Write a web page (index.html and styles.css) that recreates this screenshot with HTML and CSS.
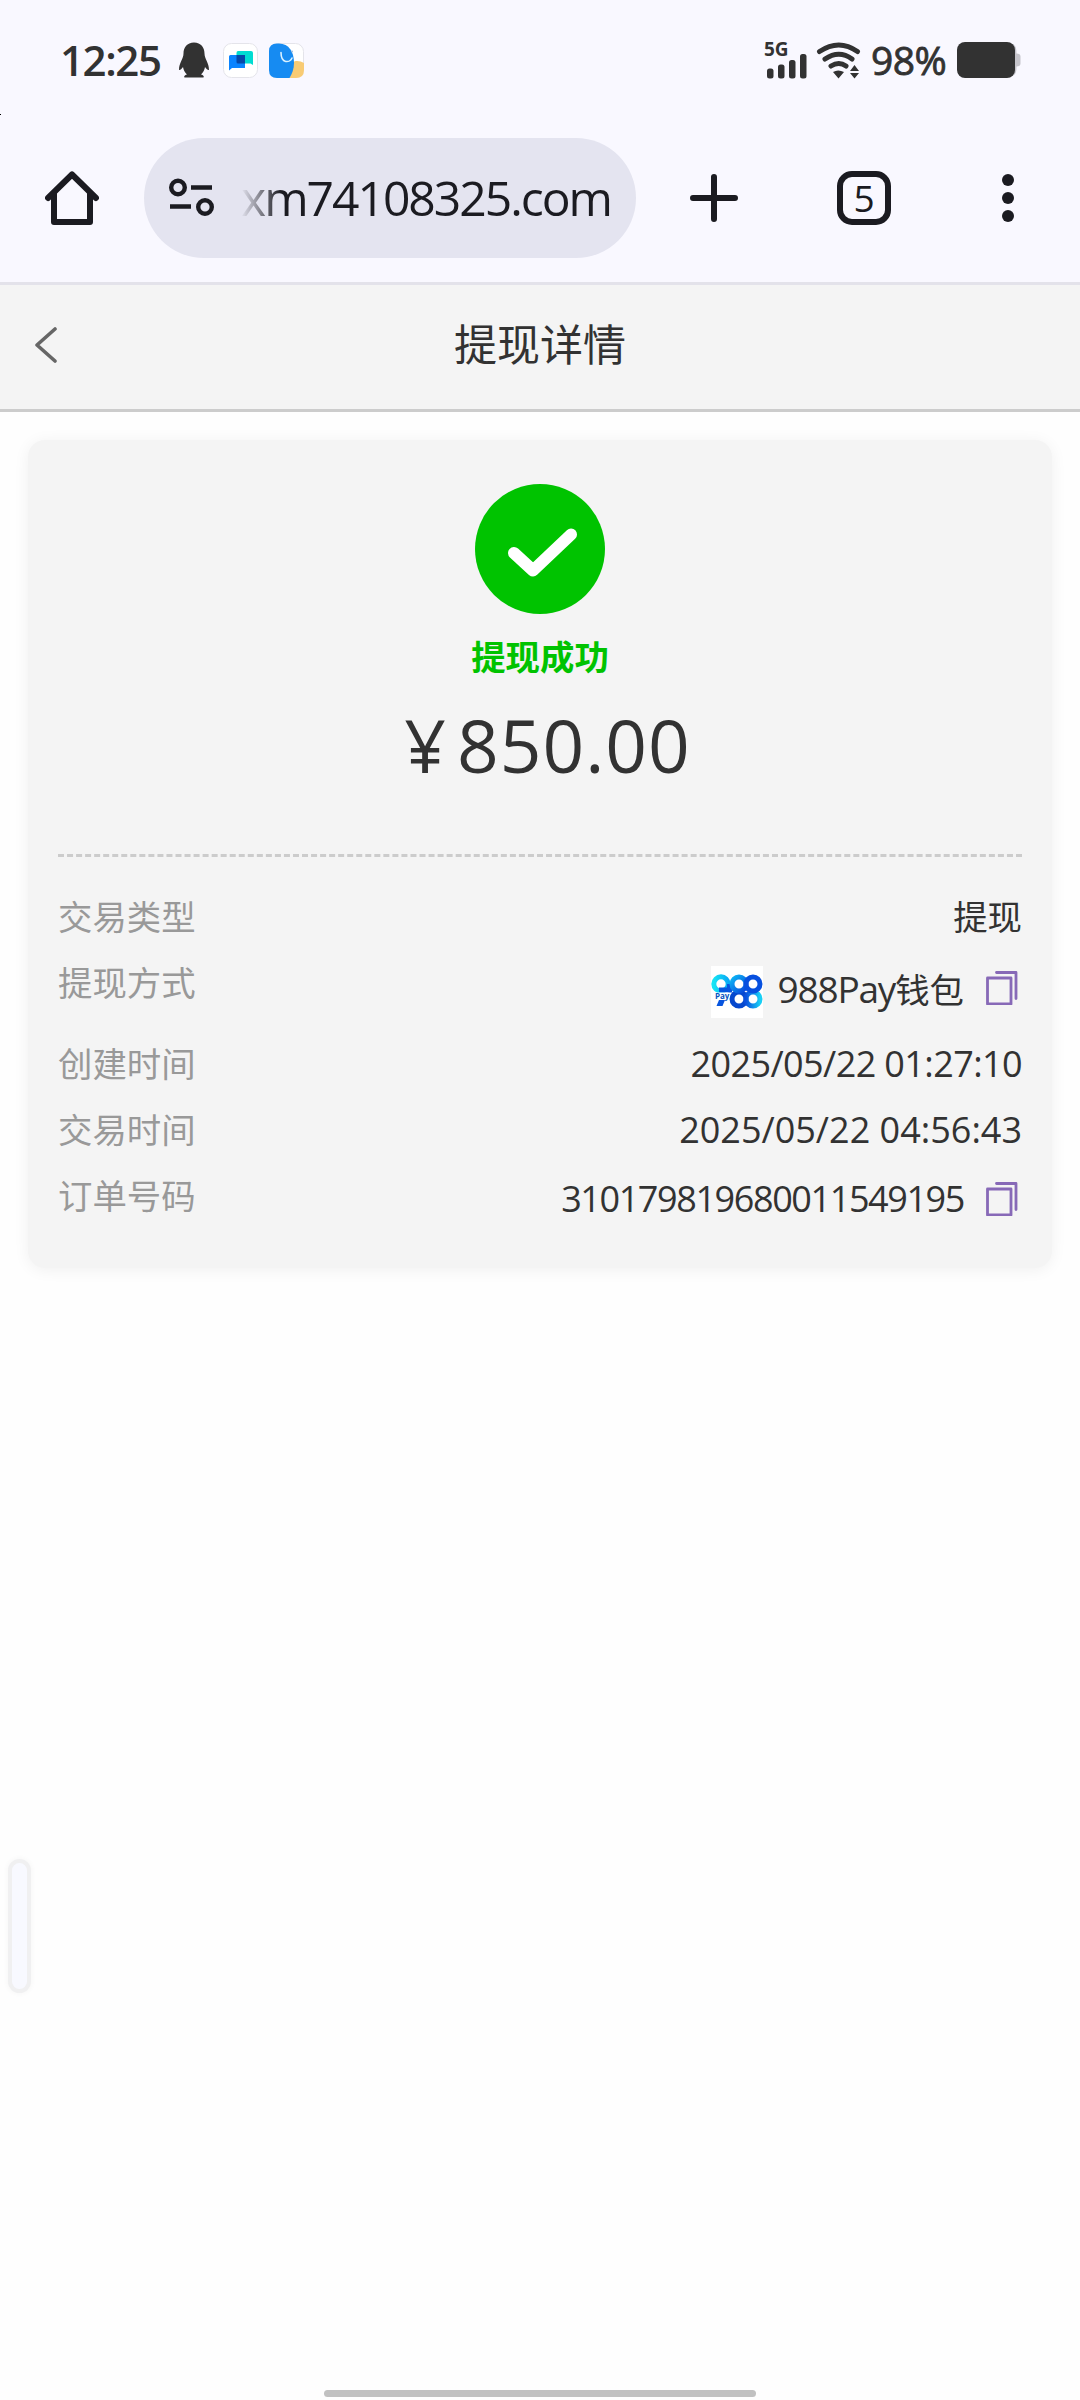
FILE: index.html
```html
<!DOCTYPE html>
<html lang="zh-CN">
<head>
<meta charset="utf-8">
<title>提现详情</title>
<link rel="stylesheet" href="styles.css">
</head>
<body>
<div class="screen">
  <div class="statusbar">
    <span class="clock">12:25</span>
    <svg class="app penguin" width="30" height="36" viewBox="0 0 30 36"><path fill="#323232" d="M15 0.500C8 .5 4.500 5.500 4.500 11.500C4.500 17 0 20.500 0 28C1 28.500 2.500 27 4 25C4.500 28 6 31 8 32.500C5 33 4.500 35.500 6 35.500H24C25.500 35.500 25 33 22 32.500C24 31 25.500 28 26 25C27.500 27 29 28.500 30 28C30 20.500 25.500 17 25.500 11.500C25.500 5.500 22 .5 15 .5Z"/></svg>
    <svg class="app chat" width="35" height="35" viewBox="0 0 35 35"><rect x=".5" y=".5" width="34" height="34" rx="8" fill="#fff" stroke="#e4e4ea"/><path fill="#00dcd2" d="M15 8H28q2 0 2 2V22L27.500 20.500H15q-1.500 0-1.500-1.500V10q0-2 1.500-2Z"/><path fill="#0a84ff" d="M7.500 12H22V25H9L6 27.500V13.500q0-1.500 1.500-1.500Z"/><path fill="#0648a8" d="M13.500 12H22V20.500H15q-1.500 0-1.500-1.500Z"/></svg>
    <svg class="app elephant" width="35" height="35" viewBox="0 0 35 35"><rect x=".5" y=".5" width="34" height="34" rx="8" fill="#fff" stroke="#e4e4ea"/><path fill="#f8cb74" d="M22 20C27 17 31 18 35 20V27q0 8-8 8H20Z"/><path fill="#168bf2" d="M8 0.500H10C20 .5 25 9 25 20C25 26 23 31 20.500 35H8Q0 35 0 27V8Q0 .5 8 .5Z"/><path fill="none" stroke="#d9f1ff" stroke-width="1.600" stroke-linecap="round" d="M12 9.500C12 21 21 20 23 15"/><circle cx="23" cy="8.500" r="1" fill="#9bd"/></svg>
    <div class="cellular">
      <span class="net">5G</span>
      <svg class="signal" width="40" height="25" viewBox="0 0 40 25"><g fill="#323232"><rect y="14.500" width="6.500" height="10" rx="2.500"/><rect x="11" y="10.500" width="6.500" height="14" rx="2.500"/><rect x="22" y="6" width="6.500" height="18.500" rx="2.500"/><rect x="33" width="6.500" height="24.500" rx="2.500"/></g></svg>
    </div>
    <svg class="wifi" width="46" height="37" viewBox="0 0 46 37"><g fill="none" stroke="#323232" stroke-width="5" stroke-linecap="round"><path d="M3.500 9.500Q23 -3.500 41.500 9.500"/><path d="M9 17Q23 7.500 36 17"/><path d="M15 24Q23 19 30 24"/></g><path fill="#323232" d="M17 30Q22 27 28 30L22.500 36.500ZM34 29L38.500 23L43 29ZM34 31H43L38.500 36.500Z"/></svg>
    <span class="percent">98%</span>
    <svg class="battery" width="64" height="36" viewBox="0 0 64 36"><path fill="#c5c4cb" d="M55 2C59 3 59.500 7 59.500 11.500q4 0 4 3v7q0 3-4 3C59.500 29 59 33 55 34Z"/><rect width="58" height="36" rx="8" fill="#323232"/></svg>
  </div>
  <div class="toolbar">
    <svg class="home" width="54" height="54" viewBox="0 0 54 54" fill="none" stroke="#1b1b21" stroke-width="6" stroke-linecap="round" stroke-linejoin="round"><path d="M3 27L27 3.500L51 27"/><path stroke-linecap="butt" d="M9 21V51H45V21"/></svg>
    <div class="address">
      <svg class="site" width="46" height="40" viewBox="0 0 46 40" fill="none" stroke="#1b1b21"><circle cx="9" cy="9.500" r="6.800" stroke-width="4.400"/><circle cx="36" cy="29" r="6.800" stroke-width="4.400"/><path stroke-width="4.500" d="M22 9.500H43M1 28.500H22"/></svg>
      <span class="url">xm74108325.com</span>
    </div>
    <svg class="plus" width="48" height="48" viewBox="0 0 48 48" stroke="#1b1b21" stroke-width="6" stroke-linecap="round"><path d="M24 3V45M3 24H45"/></svg>
    <div class="tabs">5</div>
    <svg class="more" width="12" height="48" viewBox="0 0 12 48" fill="#1b1b21"><circle cx="6" cy="6" r="6"/><circle cx="6" cy="24" r="6"/><circle cx="6" cy="42" r="6"/></svg>
  </div>
  <header class="header">
    <svg class="back" width="22" height="36" viewBox="0 0 22 36" fill="none" stroke="#666" stroke-width="3.600" stroke-linecap="round" stroke-linejoin="round"><path d="M20 2L2 18L20 34"/></svg>
    <h1 class="title">提现详情</h1>
  </header>
  <main class="card">
    <svg class="success" width="130" height="130" viewBox="0 0 130 130"><circle cx="65" cy="65" r="65" fill="#00c300"/><path d="M39 69L58 86.500L96 50.500" fill="none" stroke="#fff" stroke-width="12" stroke-linecap="round" stroke-linejoin="round"/></svg>
    <div class="state">提现成功</div>
    <div class="amount"><span class="yen">¥</span><span class="sum">850.00</span></div>
    <div class="details">
      <div class="row"><span class="label">交易类型</span><span class="value">提现</span></div>
      <div class="row wallet-row"><span class="label">提现方式</span>
        <span class="value wallet">
          <svg class="logo" width="52" height="52" viewBox="0 0 52 52">
            <defs><linearGradient id="a" x1="0" x2="1"><stop offset="0" stop-color="#16e4f4"/><stop offset="1" stop-color="#08aaf5"/></linearGradient><linearGradient id="b" x1="0" x2="1" y1="0" y2="1"><stop offset="0" stop-color="#0cb5f5"/><stop offset="1" stop-color="#0745dc"/></linearGradient><linearGradient id="c" x1="0" x2="1"><stop offset="0" stop-color="#0a50de"/><stop offset="1" stop-color="#18cff5"/></linearGradient></defs>
            <rect width="52" height="52" fill="#fff"/>
            <g fill="none" stroke-width="5"><circle cx="10" cy="18" r="7.200" stroke="url(#a)"/><path stroke="#0755df" d="M18.500 18V24H8"/><circle cx="28" cy="33" r="7" stroke="#0648ce"/><circle cx="42" cy="33" r="7" stroke="url(#c)"/><circle cx="28" cy="18" r="7" stroke="url(#b)"/><circle cx="42" cy="18" r="7" stroke="#0750df"/></g>
            <path fill="#fff" d="M3 26.500H17.500V33.500H3Z"/>
            <path fill="#0755df" d="M8 34H14L11.500 40H5.500Z"/><text class="logo-text" x="4" y="32.500">Pay</text>
          </svg>
          <span class="wallet-name"><span class="latin">988Pay</span>钱包</span>
          <svg class="copy" width="32" height="34" viewBox="0 0 32 34" fill="none" stroke="#8769b7" stroke-width="2.800" stroke-linejoin="round" stroke-linecap="round"><rect x="1.500" y="7" width="23.500" height="26"/><path d="M10.500 1.500H30V27.500"/></svg>
        </span></div>
      <div class="row"><span class="label">创建时间</span><span class="value number created">2025/05/22 01:27:10</span></div>
      <div class="row"><span class="label">交易时间</span><span class="value number traded">2025/05/22 04:56:43</span></div>
      <div class="row order-row"><span class="label">订单号码</span>
        <span class="value"><span class="number order">310179819680011549195</span>
          <svg class="copy" width="32" height="34" viewBox="0 0 32 34" fill="none" stroke="#8769b7" stroke-width="2.800" stroke-linejoin="round" stroke-linecap="round"><rect x="1.500" y="7" width="23.500" height="26"/><path d="M10.500 1.500H30V27.500"/></svg>
        </span></div>
    </div>
  </main>
  <div class="gesture"></div>
  <div class="edge-handle"></div>
  <div class="edge-mark"></div>
</div>
</body>
</html>
```
FILE: styles.css
```css
* { box-sizing: border-box; }
body { margin: 0; background: #fff; }
svg { display: block; flex: none; }

.screen {
  position: relative;
  display: flex;
  flex-direction: column;
  width: 1080px;
  height: 2400px;
  overflow: hidden;
  background: #fefefe;
  color: #323232;
  font-family: "Open Sans", "Noto Sans CJK SC", sans-serif;
}

/* Status bar */
.statusbar {
  display: flex;
  align-items: center;
  height: 120px;
  padding: 0 59px 0 60px;
  background: #f9f8ff;
}
.clock { width: 119px; font-size: 42px; font-weight: 600; line-height: 60px; letter-spacing: -1.4px; white-space: nowrap; }
.penguin { margin-right: 14px; }
.chat { margin-right: 11px; }
.cellular {
  display: flex;
  flex-direction: column;
  width: 44px;
  height: 48px;
  margin: 0 7px 0 auto;
}
.net { font-size: 19px; font-weight: 700; line-height: 26px; height: 17px; margin-left: -1px; }
.signal { margin: 1px 0 0 2px; }
.wifi { margin-right: 9px; }
.percent { width: 86px; font-size: 39px; -webkit-text-stroke: .8px #323232; line-height: 60px; letter-spacing: -.5px; white-space: nowrap; }

/* Browser toolbar */
.toolbar {
  display: flex;
  align-items: center;
  height: 165px;
  padding: 0 66px 6px 45px;
  border-bottom: 3px solid #e3e2ea;
  background: #f9f8ff;
}
.address {
  display: flex;
  align-items: center;
  width: 492px;
  height: 120px;
  margin: 0 54px 0 45px;
  padding-left: 25px;
  border-radius: 60px;
  background: #e4e4f0;
}
.url {
  margin-left: 26px;
  font-size: 48px;
  line-height: 70px;
  letter-spacing: -2px;
  white-space: nowrap;
  color: transparent;
  background: linear-gradient(90deg, #1b1b2100, #1b1b21 40px);
  background-clip: text;
}
.tabs {
  width: 54px;
  height: 54px;
  margin: 0 111px 0 99px;
  border: 6px solid #1b1b21;
  border-radius: 15px;
  color: #1b1b21;
  font-size: 37px;
  line-height: 41px;
  text-align: center;
}

/* Page header */
.header {
  display: grid;
  grid-template-columns: 1fr auto 1fr;
  align-items: center;
  height: 127px;
  padding: 0 35px 4px;
  border-bottom: 3px solid #ccc;
  background: #f4f4f4;
}
.title { margin: 0; font-size: 43px; font-weight: 400; line-height: 60px; }

/* Result card */
.card {
  display: flex;
  flex-direction: column;
  align-items: center;
  height: 828px;
  margin: 28px 28px 0;
  padding: 44px 30px 0;
  border-radius: 17px;
  background: #f4f4f4;
  box-shadow: 0 2px 16px rgba(0, 0, 0, .06);
}
.state { margin-top: 18px; color: #00c300; font-size: 34.400px; font-weight: 700; line-height: 50px; }
.amount { display: flex; justify-content: center; gap: 11px; margin: 13px 0 0 15px; font-size: 73px; line-height: 100px; }
.sum { letter-spacing: 1px; }
.details {
  align-self: stretch;
  margin-top: 59px;
  padding-top: 29px;
  border-top: 3px dashed #ccc;
}
.row { display: flex; justify-content: space-between; height: 66px; font-size: 34.400px; line-height: 62px; }
.wallet-row { height: 81px; }
.label { color: #999; }
.value { display: flex; white-space: nowrap; }
.number { font-size: 36px; }
.created { letter-spacing: -.6px; }
.traded { letter-spacing: 0; }
.order { letter-spacing: -1.400px; margin-top: 3px; }
.copy { margin: 17px 4px 0 22px; }
.logo { margin: 14px 15px 0 0; }
.wallet-name { margin-top: 6px; }
.latin { font-size: 37px; letter-spacing: -1.200px; }
.logo-text { font: 700 8px "Open Sans", sans-serif; fill: #0755bf; }
.wallet .copy { margin-top: 19px; }

.gesture { width: 432px; height: 7px; margin: auto auto 3px; border-radius: 4px; background: #c1c1c1; }
.edge-handle {
  position: absolute;
  left: 8px;
  top: 1859px;
  width: 23px;
  height: 134px;
  border: 4px solid #f0f0f1;
  border-radius: 12px;
  background: #f8f9ff;
  box-shadow: 0 0 4px 2px rgba(0, 0, 0, .025);
}
.edge-mark { position: absolute; left: 0; top: 114px; width: 1px; height: 1px; background: #000; }
```
